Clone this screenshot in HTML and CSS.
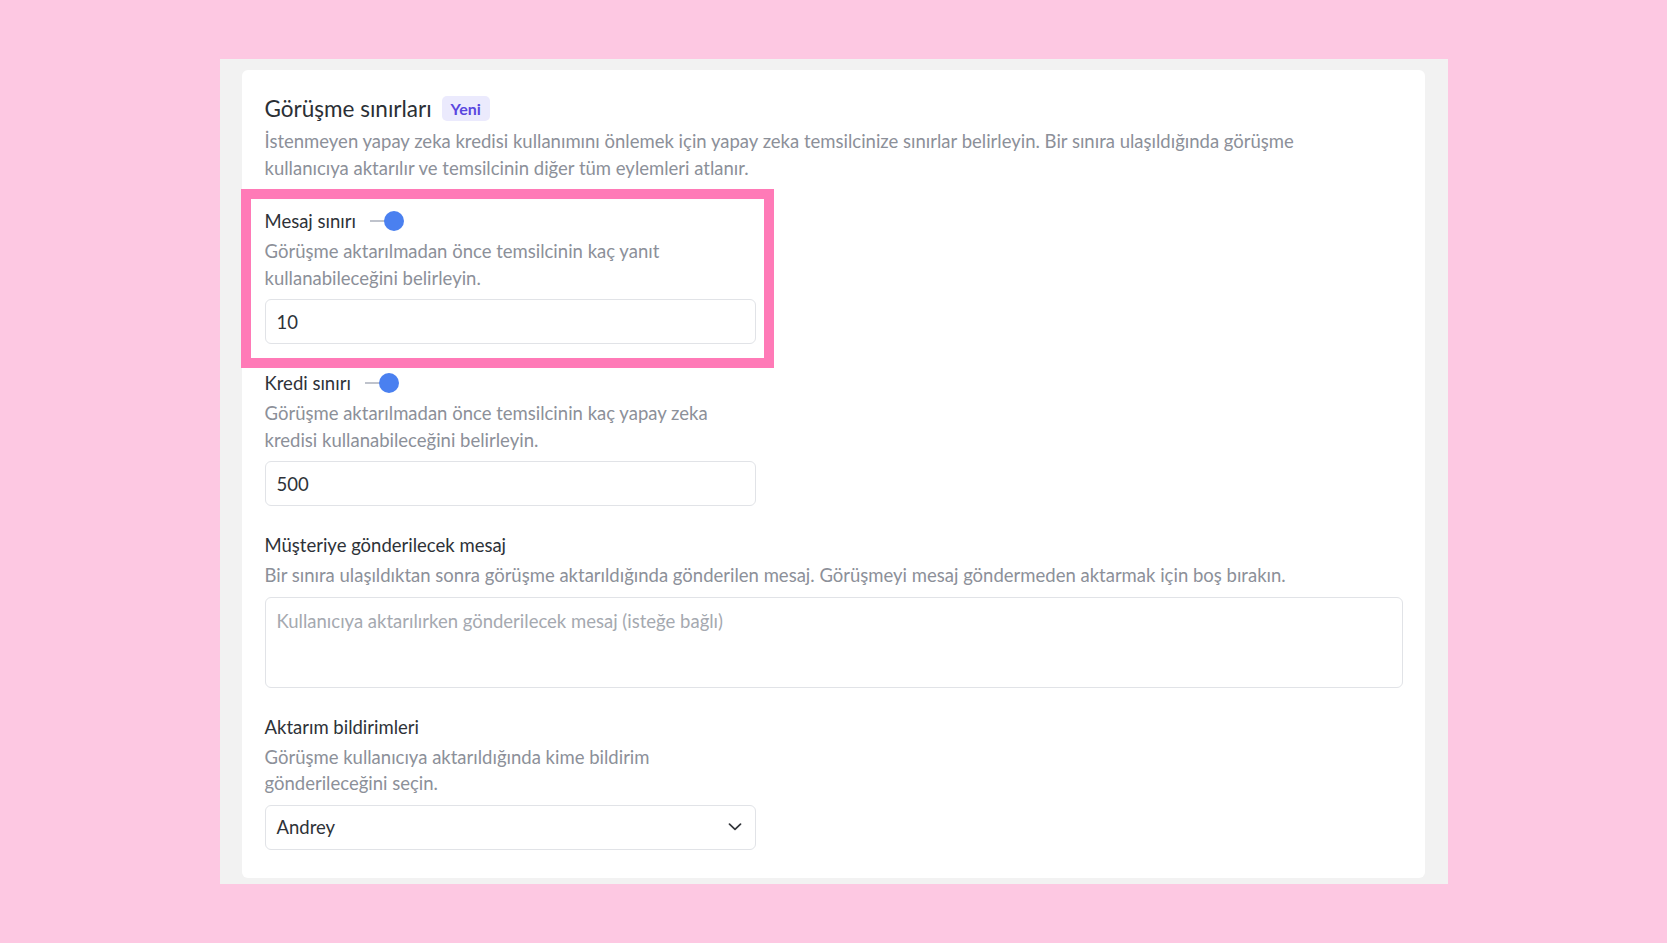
FILE: index.html
```html
<!DOCTYPE html>
<html>
<head>
	<title>Görüşme sınırları</title>
	<link rel="stylesheet" href="styles.css">
</head>
<body>
	<div class="panel">
		<div class="card">
			<div class="section-head">
				<h2>Görüşme sınırları</h2>
				<span class="badge">Yeni</span>
			</div>
			<p class="section-desc">İstenmeyen yapay zeka kredisi kullanımını önlemek için yapay zeka temsilcinize sınırlar belirleyin. Bir sınıra ulaşıldığında görüşme kullanıcıya aktarılır ve temsilcinin diğer tüm eylemleri atlanır.</p>

			<div class="field narrow highlight">
				<div class="label-row">
					<label for="message-limit">Mesaj sınırı</label>
					<span class="switch"></span>
				</div>
				<p class="hint">Görüşme aktarılmadan önce temsilcinin kaç yanıt kullanabileceğini belirleyin.</p>
				<input type="text" id="message-limit" value="10">
			</div>

			<div class="field narrow">
				<div class="label-row">
					<label for="credit-limit">Kredi sınırı</label>
					<span class="switch"></span>
				</div>
				<p class="hint">Görüşme aktarılmadan önce temsilcinin kaç yapay zeka kredisi kullanabileceğini belirleyin.</p>
				<input type="text" id="credit-limit" value="500">
			</div>

			<div class="field">
				<div class="label-row">
					<label for="customer-message">Müşteriye gönderilecek mesaj</label>
				</div>
				<p class="hint">Bir sınıra ulaşıldıktan sonra görüşme aktarıldığında gönderilen mesaj. Görüşmeyi mesaj göndermeden aktarmak için boş bırakın.</p>
				<textarea id="customer-message" placeholder="Kullanıcıya aktarılırken gönderilecek mesaj (isteğe bağlı)"></textarea>
			</div>

			<div class="field narrow">
				<div class="label-row">
					<label>Aktarım bildirimleri</label>
				</div>
				<p class="hint">Görüşme kullanıcıya aktarıldığında kime bildirim gönderileceğini seçin.</p>
				<div class="select">
					<span>Andrey</span>
					<svg width="14" height="8" viewBox="0 0 14 8"><polyline points="1.5,1.2 7,6.4 12.5,1.2" fill="none" stroke="#33363b" stroke-width="1.7" stroke-linecap="round" stroke-linejoin="round"/></svg>
				</div>
			</div>
		</div>
	</div>
</body>
</html>
```

FILE: styles.css
```css
body {
	margin: 0;
	background-color: #fdc8e2;
	font-family: "Lato", "Noto Sans", sans-serif;
	color: #2e3238;
}

.panel {
	width: 1228px;
	margin: 59px auto 0;
	padding: 11px 23px 6px 22px;
	box-sizing: border-box;
	background-color: #f2f2f2;
}

.card {
	background-color: #fff;
	border-radius: 6px;
	padding: 24px 22px 28px 23px;
}

.section-head {
	display: flex;
	align-items: center;
	gap: 10px;
	height: 28px;
}

h2 {
	margin: 0;
	font-size: 22.5px;
	font-weight: 400;
	color: #2b2f35;
}

.badge {
	display: inline-flex;
	align-items: center;
	height: 25px;
	padding: 0 9px;
	border-radius: 5px;
	background-color: #ebeafd;
	color: #5a46df;
	font-size: 16px;
	font-weight: 700;
}

.section-desc {
	max-width: 1100px;
	margin: 6px 0 27px;
	font-size: 18.5px;
	line-height: 26.5px;
	color: #8c9099;
}

.field {
	margin-bottom: 26px;
}

.field:last-child {
	margin-bottom: 0;
}

.field.narrow {
	width: 491px;
}

.field.narrow .hint {
	max-width: 460px;
}

.highlight {
	position: relative;
}

.highlight::after {
	content: '';
	position: absolute;
	left: -24px;
	top: -19px;
	right: -18px;
	bottom: -24px;
	border: 10px solid #ff7ab7;
	pointer-events: none;
}

.label-row {
	display: flex;
	align-items: center;
	height: 26px;
}

label {
	font-size: 18.5px;
	color: #2e3238;
}

.switch {
	position: relative;
	width: 34px;
	height: 20px;
	margin-left: 14px;
}

.switch::before {
	content: '';
	position: absolute;
	left: 0;
	right: 4px;
	top: 9px;
	height: 2px;
	background-color: #bfc3cc;
}

.switch::after {
	content: '';
	position: absolute;
	right: 0;
	top: 0;
	width: 20px;
	height: 20px;
	border-radius: 50%;
	background-color: #4a80f0;
}

.hint {
	margin: 4px 0 8px;
	font-size: 18.5px;
	line-height: 26.5px;
	color: #8c9099;
}

input, textarea, .select {
	display: block;
	width: 100%;
	box-sizing: border-box;
	border: 1px solid #e1e3e7;
	border-radius: 6px;
	background-color: #fff;
	font-family: "Lato", "Noto Sans", sans-serif;
	font-size: 18.5px;
	color: #2e3238;
	padding: 0 11px;
	margin: 0;
	outline: none;
}

input {
	height: 45px;
}

textarea {
	height: 91px;
	padding-top: 10px;
	resize: none;
	line-height: 26px;
}

textarea::placeholder {
	color: #a5a9b0;
}

.select {
	display: flex;
	align-items: center;
	justify-content: space-between;
	height: 45px;
	padding-right: 13px;
}
```
